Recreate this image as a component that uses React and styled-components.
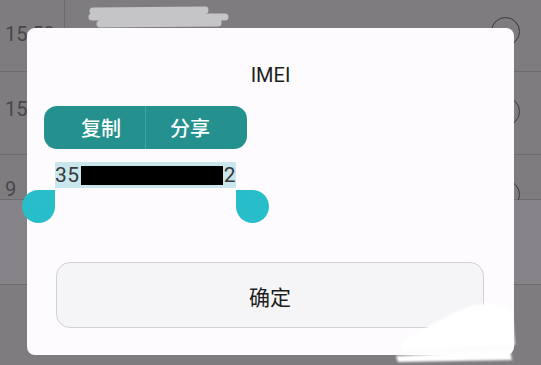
import React from 'react';
import styled, { createGlobalStyle } from 'styled-components';

const GlobalStyle = createGlobalStyle`
  html, body {
    margin: 0;
    padding: 0;
    overflow: hidden;
  }
  body {
    font-family: Roboto, "Noto Sans CJK SC", sans-serif;
  }
`;

// the dimmed list behind the dialog
const Screen = styled.div`
  position: relative;
  width: 541px;
  height: 365px;
  overflow: hidden;
  background: #7f7c80;
`;

const List = styled.div`
  display: flex;
  flex-direction: column;
`;

const Row = styled.div`
  display: grid;
  grid-template-columns: 65px 1fr 60px;
  height: ${(p) => p.h}px;
  border-bottom: 1px solid #6e6b70;
  box-sizing: border-box;
  background: ${(p) => (p.light ? '#858288' : 'transparent')};
`;

const TimeCell = styled.div`
  border-right: ${(p) => (p.noLine ? 'none' : '1px solid #6e6b70')};
  color: #48464a;
  font-size: 20px;
  padding: ${(p) => p.top}px 0 0 5px;
  white-space: nowrap;
  overflow: hidden;
`;

const InfoCell = styled.div`
  display: flex;
  justify-content: flex-end;
  align-items: flex-start;
  font-size: 17px;
  color: #3c3a3e;
`;

const InfoRing = styled.div`
  width: 27px;
  height: 27px;
  margin: ${(p) => p.top}px 21px 0 0;
  border: 1.5px solid #3a383c;
  border-radius: 50%;
  flex: none;
`;

const Dialog = styled.div`
  position: absolute;
  left: 27px;
  top: 28px;
  width: 487px;
  height: 327px;
  box-sizing: border-box;
  background: #fdfbfd;
  border-radius: 8px;
  padding: 34px 17px 0;
  display: flex;
  flex-direction: column;
`;

const Title = styled.div`
  height: 26px;
  line-height: 26px;
  text-align: center;
  font-size: 20px;
  color: #1e1e1e;
`;

const ActionBar = styled.div`
  align-self: flex-start;
  margin-top: 18px;
  height: 43px;
  display: flex;
  background: #25918f;
  border-radius: 13px;
  overflow: hidden;
`;

const ActionButton = styled.div`
  width: ${(p) => p.w}px;
  box-sizing: border-box;
  display: flex;
  align-items: center;
  justify-content: ${(p) => (p.first ? 'flex-end' : 'flex-start')};
  padding: ${(p) => (p.first ? '0 24px 0 0' : '0 0 0 24px')};
  color: #ffffff;
  font-size: 20px;
  font-weight: 500;
  font-family: "Noto Sans CJK SC", sans-serif;
  & + & {
    border-left: 1px solid #3ba6a3;
  }
`;

const Selection = styled.div`
  position: relative;
  align-self: flex-start;
  margin: 13px 0 0 11px;
  width: 181px;
  height: 26px;
  background: #c8e6ec;
  display: flex;
  align-items: center;
  font-size: 21px;
  color: #38383a;
  letter-spacing: 0.5px;
`;

const Redacted = styled.span`
  display: inline-block;
  width: 143px;
  height: 19px;
  background: #000;
  margin: 0 1px;
`;

const Handle = styled.div`
  position: absolute;
  top: 28px;
  width: 33px;
  height: 33px;
  background: #27bdc9;
  ${(p) =>
    p.side === 'left'
      ? 'right: 100%; border-radius: 50% 0 50% 50%;'
      : 'left: 100%; border-radius: 0 50% 50% 50%;'}
`;

const ConfirmButton = styled.div`
  margin: 74px 13px 0 12px;
  height: 66px;
  box-sizing: border-box;
  border: 1px solid #d2d0d6;
  border-radius: 14px;
  background: #f5f4f6;
  display: flex;
  align-items: center;
  justify-content: center;
  padding-top: 2px;
  font-size: 21px;
  font-family: "Noto Sans CJK SC", sans-serif;
  color: #1c1c1c;
`;

const Scribble = styled.svg`
  position: absolute;
  left: 0;
  top: 0;
  pointer-events: none;
`;

export default function App() {
  return (
    <>
      <GlobalStyle />
      <Screen>
        <List>
          <Row h={72}>
            <TimeCell top={22}>15:53</TimeCell>
            <InfoCell />
            <InfoCell>
              <InfoRing top={17} />
            </InfoCell>
          </Row>
          <Row h={83}>
            <TimeCell top={25}>15</TimeCell>
            <InfoCell />
            <InfoCell>
              <InfoRing top={25} />
            </InfoCell>
          </Row>
          <Row h={45}>
            <TimeCell top={22}>9</TimeCell>
            <InfoCell />
            <InfoCell>
              <InfoRing top={25} />
            </InfoCell>
          </Row>
          <Row h={85} light>
            <TimeCell noLine />
            <InfoCell />
            <InfoCell />
          </Row>
        </List>

        <Scribble width="541" height="365">
          <path
            d="M93 11 L205 10 M92 17 L225 17 M100 24 L218 23"
            stroke="#c5c4c6"
            strokeWidth="7"
            strokeLinecap="round"
            fill="none"
          />
        </Scribble>

        <Dialog>
          <Title>IMEI</Title>
          <ActionBar>
            <ActionButton w={101} first>复制</ActionButton>
            <ActionButton w={102}>分享</ActionButton>
          </ActionBar>
          <Selection>
            35<Redacted />2
            <Handle side="left" />
            <Handle side="right" />
          </Selection>
          <ConfirmButton>确定</ConfirmButton>
        </Dialog>

        <Scribble width="541" height="365">
          <defs>
            <filter id="soft" x="-10%" y="-10%" width="120%" height="120%">
              <feGaussianBlur stdDeviation="1.2" />
            </filter>
          </defs>
          <g filter="url(#soft)" fill="#ffffff">
            <path d="M470 306 Q500 300 512 312 L515 345 L402 350 Q400 338 420 332 Q440 318 470 306 Z" />
            <path d="M396 356 L510 350 L512 360 L398 362 Z" />
          </g>
        </Scribble>
      </Screen>
    </>
  );
}
